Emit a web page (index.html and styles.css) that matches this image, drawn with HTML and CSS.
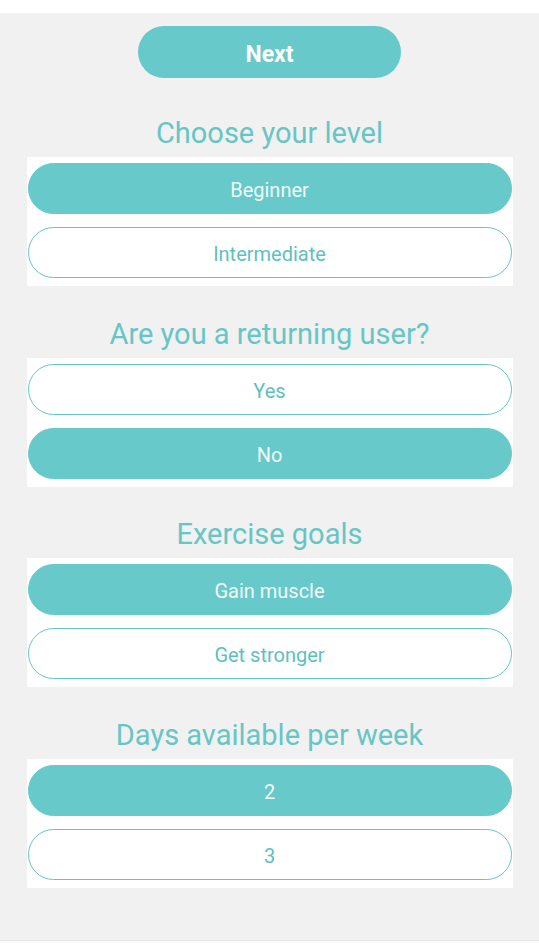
FILE: index.html
```html
<!DOCTYPE html>
<html>
<head>
<meta charset="utf-8">
<link rel="stylesheet" href="styles.css">
</head>
<body>
<div class="topbar"></div>
<main class="page">
  <button class="next">Next</button>

  <section class="group">
    <h2 class="title">Choose your level</h2>
    <div class="card">
      <button class="opt filled">Beginner</button>
      <button class="opt">Intermediate</button>
    </div>
  </section>

  <section class="group">
    <h2 class="title">Are you a returning user?</h2>
    <div class="card">
      <button class="opt">Yes</button>
      <button class="opt filled">No</button>
    </div>
  </section>

  <section class="group">
    <h2 class="title">Exercise goals</h2>
    <div class="card">
      <button class="opt filled">Gain muscle</button>
      <button class="opt">Get stronger</button>
    </div>
  </section>

  <section class="group">
    <h2 class="title">Days available per week</h2>
    <div class="card">
      <button class="opt filled">2</button>
      <button class="opt">3</button>
    </div>
  </section>
</main>
<div class="bottombar"></div>
</body>
</html>
```

FILE: styles.css
```css
html, body {
  margin: 0;
  padding: 0;
}
body {
  background: #f1f1f1;
  font-family: Roboto, "Noto Sans", sans-serif;
  height: 943px;
  display: flex;
  flex-direction: column;
  overflow: hidden;
}
.topbar {
  height: 13px;
  background: #ffffff;
  flex: none;
}
.page {
  flex: 1;
  display: flex;
  flex-direction: column;
  align-items: center;
}
.bottombar {
  height: 2px;
  background: #fafafa;
  border-top: 1px solid #e6e6e6;
  flex: none;
}
button {
  font-family: inherit;
  cursor: pointer;
}
.next {
  margin-top: 13px;
  width: 263px;
  height: 52px;
  padding: 4px 0 0;
  border: none;
  border-radius: 26px;
  background: #67c9c9;
  color: #ffffff;
  font-size: 23px;
  font-weight: 700;
}
.group {
  width: 486px;
  display: flex;
  flex-direction: column;
  align-items: center;
}
.group:first-of-type .title {
  margin-top: 36px;
}
.title {
  box-sizing: border-box;
  margin: 28.7px 0 7px;
  height: 36px;
  line-height: 36px;
  font-size: 29px;
  font-weight: 400;
  color: #66c6c6;
  padding-top: 1px;
}
.card {
  width: 486px;
  box-sizing: border-box;
  background: #ffffff;
  padding: 6px 1px 8px;
  display: flex;
  flex-direction: column;
  gap: 13px;
}
.opt {
  height: 51px;
  width: 100%;
  box-sizing: border-box;
  padding: 3px 0 0;
  border-radius: 26px;
  border: 1.5px solid #66c4c4;
  background: #ffffff;
  color: #5fbfbf;
  font-size: 20px;
  font-weight: 400;
}
.opt.filled {
  background: #67c9c9;
  border-color: #67c9c9;
  color: #f2fbfb;
}
```
